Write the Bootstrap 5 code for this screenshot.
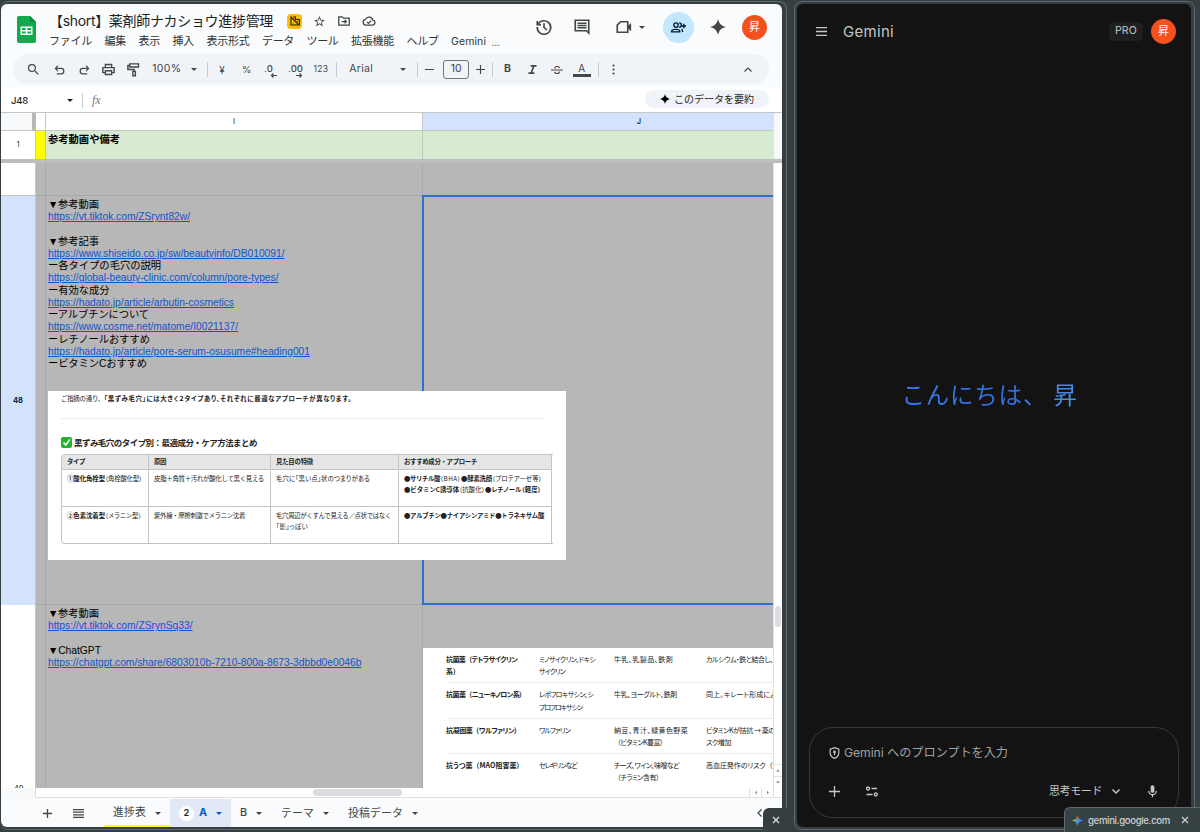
<!DOCTYPE html>
<html lang="ja">
<head>
<meta charset="utf-8">
<meta name="viewport" content="width=device-width, initial-scale=1">
<title>薬剤師ナカショウ進捗管理</title>
<link href="https://cdn.jsdelivr.net/npm/bootstrap@5.3.0/dist/css/bootstrap.min.css" rel="stylesheet">
<style>
:root{--frame:#353f42;--edge:#5f6a6c;--ink:#444746;--cell:#b7b7b7;--pick:#d3e3fd}
body{width:1200px;height:832px;overflow:hidden;background:var(--frame);font-family:Inter,"Noto Sans CJK JP",sans-serif;line-height:1;color:#1f1f1f}
svg{display:block;flex:none;overflow:visible}
[data-w]{display:inline-block;white-space:nowrap;flex:none}
.ln{fill:none;stroke:currentColor;stroke-width:2.2}
.desk{height:832px;padding:1px 4px 2px 0;gap:7px}
.pane{border:1px solid var(--edge);border-radius:8px;height:829px}
.pane-l{width:787px;padding:2px 4px 2px 1px;border-left:0}
.pane-r{width:401px;padding:2px 3px 2px 2px}
.win{border-radius:6px;overflow:hidden;height:823px}
.sheets{background:#f9fbfd}
.mid{justify-content:center;align-items:center;display:flex;flex:none}
/* header */
.top{height:50px}
.logo-box{width:48px;padding:12px 0 0 16px}
.doc-title{font-size:14px;color:#1f1f1f}
.menu{gap:12.5px;font-size:11px;color:#333}
.acts{color:var(--ink)}
.avatar{width:25px;height:25px;border-radius:50%;background:#f4511e;color:#fff;font-size:11px}
.share{width:31px;height:31px;border-radius:50%;background:#c2e7ff;color:#001d35}
/* toolbar */
.tools{height:30px;margin:0 13px 0 12px;border-radius:15px;background:#f0f4f9;color:var(--ink);font-size:10.5px;padding:1px 0 0 7px}
.t{width:24.7px}
.sep{width:1px;height:15px;background:#c7c9cc;flex:none}
.size-box{width:26px;height:19px;border:1px solid #747775;border-radius:3px;font-size:10.5px}
.caret-d{width:0;height:0;border:3.5px solid transparent;border-top-color:currentColor;border-bottom:0;flex:none}
.formula{height:28px;padding-top:4px;background:linear-gradient(#f9fbfd 2px,#fff 4px);font-size:9.5px}
.sum{width:124px;height:18px;border-radius:9px;background:#f0f3f8;font-size:10px;margin:-2px 13px 0 0;gap:4px}
/* grid */
.sheet{height:676px;display:grid;grid-template-columns:35px 10px 377px 350px 9px;grid-template-rows:18px 28px 4px 33px 409px 183px;border-top:1px solid #c4c7c5;background:#fff}
.sheet>*{min-width:0;min-height:0}
.hd{font-size:7.5px;color:#444;border-bottom:1px solid #c4c7c5;font-weight:500}
.rh{font-size:7.5px;color:#333;border-right:1px solid #c4c7c5}
.corner{background:#f8f9fa;border-right:4px solid #b7b7b7;border-bottom:1px solid #c4c7c5}
.g{background:var(--cell);border-right:1px solid #a8a8a8;border-bottom:1px solid #a8a8a8}
.green{background:#d9ead3;border-right:1px solid #bccbb7}
.freeze{grid-column:1/-1;background:#bdbfbe}
.notes{font:10.3px/12.28px "Liberation Sans","Noto Sans CJK JP",sans-serif;color:#000;padding:2.8px 0 0 3px}
.notes div{height:12.28px;white-space:nowrap}
.notes a{color:#1155cc;text-decoration:underline}
.sel{border:2px solid #2f6fd0;border-right:0;background:var(--cell);margin:-1px 0 0 -1px;z-index:1}
.rail{background:#fff;border-left:1px solid #e0e0e0}
.thumb{background:#dadce0;border-radius:4px}
/* picture laid over the cells */
.pic{position:absolute;left:47px;top:387px;width:518px;height:169px;background:#fff;z-index:3;padding:4px 0 0 13px;font-family:"Noto Sans CJK JP",sans-serif;font-size:6.4px;color:#222}
.pic hr{margin:15px 22px 17px 0;border-color:#bbb}
.grid4{display:grid;grid-template-columns:87px 122px 128px 153px;grid-template-rows:15px 37px 37px;border:1px solid #c4c4c4;border-right:0;border-radius:4px 0 0 4px;width:492px;height:90px}
.grid4>div{border-right:1px solid #c4c4c4;border-bottom:1px solid #c4c4c4;padding:3px 0 0 5px;line-height:11px;white-space:nowrap}
.grid4>div:nth-child(-n+4){background:#e5e5e5;line-height:8px}
.grid4>div:nth-last-child(-n+4){border-bottom:0}
.palt{font-feature-settings:"palt"}
.drug{background:#fff;height:140px;margin-top:43px;overflow:hidden;padding-left:23px;font-family:"Noto Sans CJK JP",sans-serif;font-size:7px;line-height:12.2px;color:#222;font-feature-settings:"palt"}
.drug i{font-style:normal;font-feature-settings:normal}
.drow{display:grid;grid-template-columns:93px 75px 92px 80px;height:35.4px;border-bottom:1px solid #eee;padding-top:5px}
.drow>div{white-space:nowrap}
.hbar{height:10px;background:#fff;border-bottom:1px solid #dfe1e3}
.tiny{width:12px;height:10px;border-left:1px solid #ead9dd}
.tabs{height:29px;font-size:10.8px;color:var(--ink);padding-top:1px}
.tb{height:29px}
/* corner chips over the frame */
.chip-l{position:absolute;left:763px;top:808px;width:24px;height:24px;background:var(--frame);border-radius:6px 0 0 0;z-index:5;color:#dfe3e4;padding-left:1px}
.chip-r{position:absolute;left:1064px;top:807px;width:136px;height:25px;background:#374245;border:1px solid var(--edge);border-width:1px 0 0 1px;border-radius:6px 0 0 0;z-index:5;color:#ccd0d1;font-size:9.6px;font-weight:500}
/* assistant */
.gem{background:#131314;color:#c4c7c5}
.pro{width:34px;height:19px;border-radius:5px;background:#1e1f20;font-size:10.5px}
.hello{font:400 23.5px/30px "Noto Sans CJK JP",sans-serif;background:linear-gradient(90deg,#3678e8,#346fdd 60%,#4c92ea);-webkit-background-clip:text;background-clip:text;color:transparent;margin:2px 9px 0 0}
.prompt{width:370px;height:91px;border:1px solid #37393b;border-radius:24px;margin:0 auto 9px 12px}
</style>
</head>
<body>
<div class="desk d-flex">
 <section class="pane pane-l">
  <div class="win sheets position-relative d-flex flex-column">
   <header class="top d-flex">
    <div class="logo-box"><svg width="19" height="27" viewBox="0 0 19 27"><path d="M2 0h11l6 6v19a2 2 0 0 1-2 2H2a2 2 0 0 1-2-2V2a2 2 0 0 1 2-2z" fill="#12a94f"/><path d="M13 0l6 6h-5a1 1 0 0 1-1-1z" fill="#0b8a3e"/><path d="M3.500 10.500h12v8.500h-12z" fill="#fff"/><path d="M5 12h3.700v2H5zM10.300 12H14v2h-3.700zM5 15.600h3.700v2H5zM10.300 15.600H14v2h-3.700z" fill="#12a94f"/></svg></div>
    <div>
     <div class="d-flex align-items-center" style="height:20px;margin-top:7px">
      <span class="doc-title" data-w="224">【short】薬剤師ナカショウ進捗管理</span>
      <span class="mid rounded-1" style="width:15px;height:15px;background:#fbbc04;margin-left:14px"><svg width="12" height="12" viewBox="0 0 24 24" class="ln"><path d="M8 4h5v5h8v10M4 6v14h14M3 3l18 18M8 12v0M8 16h1M12 16v0M16 13h2"/></svg></span>
      <svg style="margin-left:11px" width="13" height="13" viewBox="0 0 24 24" fill="#444746"><path d="M22 9.240l-7.190-.62L12 2 9.190 8.630 2 9.240l5.460 4.730L5.820 21 12 17.270 18.180 21l-1.630-7.030L22 9.240zM12 15.400l-3.760 2.270 1-4.280-3.320-2.880 4.380-.38L12 6.100l1.710 4.040 4.380.38-3.320 2.880 1 4.280L12 15.400z"/></svg>
      <svg style="margin-left:11px;color:#444746" width="14" height="14" viewBox="0 0 24 24" class="ln"><path d="M3 5h6l2 2h10v12H3zM8 13h8M13 10l3 3-3 3"/></svg>
      <svg style="margin-left:11px;color:#444746" width="14" height="14" viewBox="0 0 24 24" class="ln"><path d="M7 19a5 5 0 0 1-1-9.900 6.500 6.500 0 0 1 12.300 1.400A4.300 4.300 0 0 1 18.500 19zM8.500 13.500l2.500 2.500 4.500-4.500"/></svg>
     </div>
     <nav class="menu d-flex align-items-center" style="height:20px"><span data-w="43">ファイル</span><span data-w="21.5">編集</span><span data-w="21.5">表示</span><span data-w="21.5">挿入</span><span data-w="43">表示形式</span><span data-w="32">データ</span><span data-w="32">ツール</span><span data-w="43">拡張機能</span><span data-w="32">ヘルプ</span><span data-w="35" style="font-size:10.500px;padding-top:2px">Gemini</span><span style="margin-left:-7px;padding-top:2px;font-size:10px">…</span></nav>
    </div>
    <div class="acts d-flex align-items-center ms-auto" style="height:46px;margin-right:15px">
     <svg width="18" height="18" viewBox="0 0 24 24" class="ln"><path d="M4 8.500A9 9 0 1 1 3 12M3 4v5h5M12 7v5.500l4 3.500"/></svg>
     <svg style="margin-left:20px" width="18" height="18" viewBox="0 0 24 24"><path class="ln" d="M3 3h18v17l-3-3H3z"/><path class="ln" d="M6 7h12M6 10h12M6 13h12" style="stroke-width:1.700"/></svg>
     <svg style="margin-left:24px" width="18" height="18" viewBox="0 0 24 24"><path class="ln" d="M7.500 5H17v14H3V9.500z"/><path d="M17 10.500l4.500-4v11l-4.500-4z" fill="currentColor"/></svg>
     <span class="caret-d" style="margin-left:6px"></span>
     <span class="share mid" style="margin-left:18px"><svg width="15" height="15" viewBox="0 0 24 24" class="ln"><circle cx="8" cy="8" r="3.500"/><path d="M13 4.500a3.500 3.500 0 0 1 0 7M1 19v-1c0-4 13-4 13 0v1zM17 14.500c1.200.8 1.500 2 1.500 4.500M20.500 6v7M17 9.500h7"/></svg></span>
     <svg style="margin-left:16px" width="16" height="16" viewBox="0 0 24 24" fill="currentColor"><path d="M12 0c1.500 7 5 10.500 12 12-7 1.500-10.500 5-12 12-1.500-7-5-10.500-12-12C7 10.500 10.500 7 12 0z"/></svg>
     <span class="avatar mid" style="margin-left:16px">昇</span>
    </div>
   </header>
   <div class="tools d-flex align-items-center">
    <span class="mid" style="width:27px"><svg width="15" height="15" viewBox="0 0 24 24" fill="currentColor"><path d="M15.500 14h-.79l-.28-.27A6.470 6.470 0 0 0 16 9.500 6.500 6.500 0 1 0 9.500 16c1.610 0 3.090-.59 4.230-1.570l.27.28v.79l5 4.990L20.490 19l-4.990-5zm-6 0a4.500 4.500 0 1 1 0-9 4.500 4.500 0 0 1 0 9z"/></svg></span>
    <span class="t mid"><svg width="13" height="13" viewBox="0 0 24 24" class="ln"><path d="M7 20h8a5 5 0 0 0 0-10H5M9 5L4.500 10 9 15"/></svg></span>
    <span class="t mid"><svg width="13" height="13" viewBox="0 0 24 24" class="ln"><path d="M17 20H9a5 5 0 0 1 0-10h10M15 5l4.500 5L15 15"/></svg></span>
    <span class="t mid"><svg width="15" height="15" viewBox="0 0 24 24" class="ln"><path d="M7 9V4h10v5M7 17H3V9h18v8h-4M7 14h10v6H7z"/></svg></span>
    <span class="t mid"><svg width="15" height="15" viewBox="0 0 24 24" class="ln"><path d="M6 3h14v5H6zM6 5.500H3V12h10v3M11 15h4v7h-4z"/></svg></span>
    <span class="mid" style="width:42px"><span data-w="29">100%</span></span><span class="caret-d" style="margin:0 10px 0 3px"></span>
    <span class="sep" style="margin-right:2px"></span>
    <span class="t mid" style="font-size:10px">¥</span><span class="t mid" style="font-size:9.500px">%</span>
    <span class="t mid"><svg width="16" height="16" viewBox="0 0 16 16"><text x="1" y="10" font-size="9.500" font-weight="500" fill="currentColor">.0</text><path d="M14 13.500H8.500M10.500 11.500l-2 2 2 2" class="ln" style="stroke-width:1.200"/></svg></span>
    <span class="t mid"><svg width="16" height="16" viewBox="0 0 16 16"><text x="0" y="10" font-size="9.500" font-weight="500" fill="currentColor">.00</text><path d="M8 13.500h5.500M11.500 11.500l2 2-2 2" class="ln" style="stroke-width:1.200"/></svg></span>
    <span class="t mid" style="font-size:8.500px"><span data-w="14.500">123</span></span>
    <span class="sep" style="margin:0 12px 0 3px"></span>
    <span data-w="24">Arial</span><span class="caret-d" style="margin:0 11px 0 27px"></span>
    <span class="sep" style="margin-right:4px"></span>
    <span class="mid" style="width:15px"><svg width="9" height="9" viewBox="0 0 9 9" class="ln" style="stroke-width:1.200"><path d="M0 4.500h9"/></svg></span>
    <span class="size-box mid" style="margin:0 4px 0 6px">10</span>
    <span class="mid" style="width:14px"><svg width="9" height="9" viewBox="0 0 9 9" class="ln" style="stroke-width:1.200"><path d="M0 4.500h9M4.500 0v9"/></svg></span>
    <span class="sep" style="margin:0 2px 0 5px"></span>
    <b class="t mid">B</b>
    <span class="t mid"><svg width="9" height="9" viewBox="0 0 10 10" class="ln" style="stroke-width:1.800"><path d="M3 1h6.500M.5 9H7M6.300 1L3.700 9"/></svg></span>
    <span class="t mid"><svg width="12" height="12" viewBox="0 0 12 12"><text x="6" y="10" text-anchor="middle" font-size="11" font-weight="500" fill="currentColor">S</text><path d="M0 6h12" stroke="#f0f4f9" stroke-width="3"/><path d="M0 6h12" stroke="currentColor" stroke-width="1.200"/></svg></span>
    <span class="t mid flex-column"><span style="font-size:10px;line-height:10px;margin-top:1px">A</span><span style="width:18px;height:3px;background:#444746;margin-top:1px"></span></span>
    <span class="sep" style="margin:0 3px 0 4px"></span>
    <span class="mid" style="width:24px"><svg width="3" height="11" viewBox="0 0 3 11" fill="currentColor"><circle cx="1.500" cy="1.500" r="1.100"/><circle cx="1.500" cy="5.500" r="1.100"/><circle cx="1.500" cy="9.500" r="1.100"/></svg></span>
    <svg class="ms-auto ln" style="margin-right:17px;stroke-width:1.200" width="8" height="5" viewBox="0 0 8 5"><path d="M.5 4.500L4 1l3.500 3.500"/></svg>
   </div>
   <div class="formula d-flex align-items-center">
    <span data-w="17" style="margin-left:10px;font-weight:500;padding-top:2px">J48</span><span class="caret-d" style="margin-left:39px"></span><span class="sep" style="margin:0 9px"></span>
    <span style="font:italic 12px 'Liberation Serif',serif;color:#777">fx</span>
    <span class="sum mid ms-auto"><svg width="10" height="10" viewBox="0 0 24 24"><path d="M12 0c1.500 7 5 10.500 12 12-7 1.500-10.500 5-12 12-1.500-7-5-10.500-12-12C7 10.500 10.500 7 12 0z"/></svg><span data-w="80">このデータを要約</span></span>
   </div>
   <main class="sheet">
    <div class="corner"></div><div class="hd" style="border-right:1px solid #c4c7c5"></div>
    <div class="hd mid" style="border-right:1px solid #c4c7c5">I</div><div class="hd mid" style="background:var(--pick);padding-left:82px;color:#111">J</div><div class="rail" style="background:#f8f9fa"></div>
    <div class="rh mid">1</div><div style="background:#ff0;border-right:1px solid #bccbb7"></div>
    <div class="green" style="padding:3px 2px;font:bold 10.300px 'Noto Sans CJK JP',sans-serif;line-height:10px;color:#000"><span data-w="72">参考動画や備考</span></div><div class="green border-0"></div><div class="rail" style="background:#f8f9fa"></div>
    <div class="freeze"></div>
    <div class="rh" style="border-bottom:1px solid #c4c7c5"></div><div class="g"></div><div class="g"></div><div class="g border-end-0"></div><div class="rail"></div>
    <div class="rh mid fw-bold" style="background:var(--pick);color:#041e49">48</div><div class="g"></div>
    <div class="g notes" style="padding-left:2px">
     <div><span data-w="51">▼参考動画</span></div><div><a href="#" data-w="142">https://vt.tiktok.com/ZSrynt82w/</a></div><div></div>
     <div><span data-w="51">▼参考記事</span></div><div><a href="#" data-w="236.500">https://www.shiseido.co.jp/sw/beautyinfo/DB010091/</a></div>
     <div><span data-w="113">ー各タイプの毛穴の説明</span></div><div><a href="#" data-w="230.500">https://global-beauty-clinic.com/column/pore-types/</a></div>
     <div><span data-w="61.500">ー有効な成分</span></div><div><a href="#" data-w="186">https://hadato.jp/article/arbutin-cosmetics</a></div>
     <div><span data-w="101">ーアルブチンについて</span></div><div><a href="#" data-w="190">https://www.cosme.net/matome/I0021137/</a></div>
     <div><span data-w="102">ーレチノールおすすめ</span></div><div><a href="#" data-w="262">https://hadato.jp/article/pore-serum-osusume#heading001</a></div>
     <div><span data-w="99">ービタミンCおすすめ</span></div>
    </div>
    <div class="sel"></div><div class="rail"></div>
    <div class="rh overflow-hidden" style="padding:180px 0 0 13px">49</div><div class="g border-bottom-0"></div>
    <div class="g notes border-bottom-0" style="padding-left:2px">
     <div><span data-w="51">▼参考動画</span></div><div><a href="#" data-w="144.500">https://vt.tiktok.com/ZSrynSq33/</a></div><div></div>
     <div><span data-w="53">▼ChatGPT</span></div><div><a href="#" data-w="313.500">https://chatgpt.com/share/6803010b-7210-800a-8673-3dbbd0e0046b</a></div>
    </div>
    <div style="background:var(--cell)"><div class="drug">
     <div class="drow"><div><b data-w="71">抗菌薬<i>（</i>テトラサイクリン</b><br><b>系）</b></div><div><span data-w="56">ミノサイクリン、ドキシ</span><br><span data-w="26">サイクリン</span></div><div><span data-w="59">牛乳、乳製品、鉄剤</span></div><div><span data-w="67">カルシウム・鉄と結合し、</span></div></div>
     <div class="drow"><div><b data-w="76">抗菌薬<i>（</i>ニューキノロン系）</b></div><div><span data-w="54">レボフロキサシン、シ</span><br><span data-w="43">プロフロキサシン</span></div><div><span data-w="63">牛乳、ヨーグルト、鉄剤</span></div><div><span data-w="76">同上。キレート形成により</span></div></div>
     <div class="drow"><div><b data-w="71">抗凝固薬<i>（</i>ワルファリン）</b></div><div><span data-w="31">ワルファリン</span></div><div><span data-w="74">納豆、青汁、緑黄色野菜</span><br><span data-w="49"><i>（</i>ビタミンK豊富）</span></div><div><span data-w="74">ビタミンKが拮抗 → 薬のリ</span><br><span data-w="25">スク増加</span></div></div>
     <div class="drow border-0"><div><b data-w="74">抗うつ薬<i>（</i>MAO阻害薬）</b></div><div><span data-w="38">セレギリンなど</span></div><div><span data-w="65">チーズ、ワイン、味噌など</span><br><span data-w="45"><i>（</i>チラミン含有）</span></div><div><span data-w="73">高血圧発作のリスク<i>（</i>チ</span></div></div>
    </div></div>
    <div class="rail d-flex flex-column align-items-center"><span class="thumb" style="width:6px;height:21px;margin-top:1px"></span>
     <span class="mid w-100 mt-auto border-top" style="height:12px;color:#777"><span class="caret-d" style="transform:scale(.6) rotate(180deg)"></span></span><span class="mid w-100 border-top" style="height:12px;color:#777"><span class="caret-d" style="transform:scale(.6)"></span></span></div>
   </main>
   <div class="hbar d-flex align-items-center">
    <span style="width:35px;height:10px;background:#f8f9fa;border-right:1px solid #ddd"></span><span class="thumb" style="width:89px;height:7px;margin-left:277px"></span>
    <span class="tiny mid ms-auto" style="color:#777"><span class="caret-d" style="transform:scale(.6) rotate(90deg)"></span></span><span class="tiny mid" style="margin-right:8px;border-right:1px solid #ead9dd;width:13px;color:#777"><span class="caret-d" style="transform:scale(.6) rotate(-90deg)"></span></span>
   </div>
   <footer class="tabs d-flex align-items-center">
    <svg style="margin-left:42px;stroke-width:1.300" class="ln" width="9" height="9" viewBox="0 0 9 9"><path d="M0 4.500h9M4.500 0v9"/></svg>
    <svg style="margin:0 20px 0 21px;stroke-width:1.200" class="ln" width="11" height="9" viewBox="0 0 11 9"><path d="M0 .6h11M0 3.200h11M0 5.800h11M0 8.400h11"/></svg>
    <span class="tb d-flex align-items-center" style="width:66px;padding:3px 0 0 9px;border-bottom:3px solid #ff0"><span data-w="33">進捗表</span><span class="caret-d" style="margin-left:9px"></span></span>
    <span class="tb d-flex align-items-center" style="width:61px;background:#e1e9f7;padding-left:9px;color:#0b57d0"><span class="mid bg-white rounded-circle text-dark fw-bold" style="width:15px;height:15px;font-size:8.500px">2</span><b style="margin-left:5px;padding-top:1px">A</b><span class="caret-d" style="margin-left:9px"></span></span>
    <span style="margin-left:9px;font-weight:500;padding-top:1px">B</span><span class="caret-d" style="margin-left:9px"></span>
    <span data-w="33" style="margin-left:19px;padding-top:2px">テーマ</span><span class="caret-d" style="margin-left:9px"></span>
    <span data-w="55" style="margin-left:19px;padding-top:2px">投稿データ</span><span class="caret-d" style="margin-left:9px"></span>
    <svg class="ln ms-auto" style="margin-right:20px;stroke-width:1.300" width="5" height="8" viewBox="0 0 5 8"><path d="M4.500.5L1 4l3.500 3.500"/></svg>
   </footer>
   <figure class="pic m-0">
    <div style="line-height:8px"><span data-w="43">ご指摘の通り、</span><b class="palt" data-w="248">「黒ずみ毛穴」には大きく２タイプあり、それぞれに最適なアプローチが異なります。</b></div>
    <hr>
    <div class="d-flex align-items-center" style="height:12px;margin-bottom:6px;font-size:8.500px;gap:2px"><svg width="11" height="11" viewBox="0 0 11 11"><rect width="11" height="11" rx="2" fill="#1fb42c"/><path d="M2.500 5.500l2.300 2.500 4-5.500" fill="none" stroke="#fff" stroke-width="1.600"/></svg><b data-w="183">黒ずみ毛穴のタイプ別：最適成分・ケア方法まとめ</b></div>
    <div class="grid4">
     <div><b data-w="18">タイプ</b></div><div><b data-w="12">原因</b></div><div><b data-w="37">見た目の特徴</b></div><div><b data-w="73">おすすめ成分・アプローチ</b></div>
     <div><b data-w="38">①酸化角栓型</b><span class="palt" data-w="37">（角栓酸化型）</span></div><div><span data-w="110">皮脂＋角質＋汚れが酸化して黒く見える</span></div><div><span class="palt" data-w="94">毛穴に「黒い点」状のつまりがある</span></div><div><b data-w="36">●サリチル酸</b><span class="palt" data-w="21">（BHA）</span><b data-w="31">●酵素洗顔</b><span class="palt" data-w="50">（プロテアーゼ等）</span><br><b data-w="55">●ビタミンC誘導体</b><span class="palt" data-w="26">（抗酸化）</span><b class="palt" data-w="56">●レチノール（軽度）</b></div>
     <div><b data-w="38">②色素沈着型</b><span class="palt" data-w="37">（メラニン型）</span></div><div><span data-w="91">紫外線・摩擦刺激でメラニン沈着</span></div><div><span data-w="115">毛穴周辺がくすんで見える／点状ではなく</span><br><span class="palt" data-w="32">「影」っぽい</span></div><div><b data-w="140">●アルブチン●ナイアシンアミド●トラネキサム酸</b></div>
    </div>
   </figure>
  </div>
 </section>
 <section class="pane pane-r">
  <div class="win gem d-flex flex-column">
   <header class="d-flex align-items-center" style="height:55px;padding:0 15px 0 19px">
    <svg class="ln" style="stroke-width:1.300" width="11" height="9" viewBox="0 0 11 9"><path d="M0 .7h11M0 4.500h11M0 8.300h11"/></svg>
    <span data-w="51" style="margin-left:16px;font-size:15px">Gemini</span>
    <span class="pro mid ms-auto"><span data-w="22">PRO</span></span><span class="avatar mid" style="margin-left:8px">昇</span>
   </header>
   <div class="flex-grow-1 mid"><span class="hello" data-w="176">こんにちは、 昇</span></div>
   <div class="prompt d-flex flex-column">
    <div class="d-flex align-items-center" style="padding:18px 0 0 18px;font-size:12.200px;color:#a0a2a1"><svg class="ln" style="color:#c4c7c5" width="13" height="14" viewBox="0 0 24 24"><path d="M12 2l8 3v6c0 5-3 9-8 11-5-2-8-6-8-11V5z"/><circle cx="12" cy="10" r="1.500"/><path d="M12 11v5"/></svg><span data-w="164" style="margin-left:3px">Gemini へのプロンプトを入力</span></div>
    <div class="d-flex align-items-center mt-auto" style="padding:0 18px 18px 19px;font-size:11px">
     <svg class="ln" style="stroke-width:1.300" width="11" height="11" viewBox="0 0 11 11"><path d="M0 5.500h11M5.500 0v11"/></svg>
     <svg class="ln" style="margin-left:26px;stroke-width:1.300" width="12" height="11" viewBox="0 0 12 11"><circle cx="2" cy="2.500" r="1.500"/><path d="M5.500 2.500H11M.5 8.500h6"/><circle cx="9.800" cy="8.500" r="1.500"/></svg>
     <span class="ms-auto" data-w="53">思考モード</span>
     <svg class="ln" style="margin-left:10px;stroke-width:1.500" width="8" height="5" viewBox="0 0 8 5"><path d="M.5.5L4 4 7.500.5"/></svg>
     <svg style="margin-left:25px" width="15" height="15" viewBox="0 0 24 24" fill="currentColor"><path d="M12 14c1.660 0 3-1.340 3-3V5c0-1.660-1.340-3-3-3S9 3.340 9 5v6c0 1.660 1.340 3 3 3zm5-3c0 2.760-2.240 5-5 5s-5-2.240-5-5H5c0 3.530 2.610 6.430 6 6.920V21h2v-3.080c3.390-.49 6-3.390 6-6.920h-2z"/></svg>
    </div>
   </div>
  </div>
 </section>
</div>
<div class="chip-l mid"><svg class="ln" style="stroke-width:1.200" width="6" height="6" viewBox="0 0 6 6"><path d="M0 0l6 6M6 0L0 6"/></svg></div>
<div class="chip-r d-flex align-items-center">
 <svg style="margin-left:7px" width="11" height="11" viewBox="0 0 24 24"><defs><linearGradient id="sp" x1="0" y1=".3" x2="1" y2=".7"><stop offset=".1" stop-color="#f5c023"/><stop offset=".35" stop-color="#58b368"/><stop offset=".55" stop-color="#4285f4"/><stop offset="1" stop-color="#4a8cf7"/></linearGradient></defs><path d="M12 0c1.500 7 5 10.500 12 12-7 1.500-10.500 5-12 12-1.500-7-5-10.500-12-12C7 10.500 10.500 7 12 0z" fill="url(#sp)"/><path d="M12 0c1 4 2 6 4 8l-7-1c1.500-2 2.300-4 3-7z" fill="#ea4335"/></svg>
 <span data-w="82" style="margin-left:5px;padding-top:1px">gemini.google.com</span>
 <svg class="ln" style="margin-left:12px;stroke-width:1.300" width="6" height="6" viewBox="0 0 6 6"><path d="M0 0l6 6M6 0L0 6"/></svg>
</div>
<script src="https://cdn.jsdelivr.net/npm/bootstrap@5.3.0/dist/js/bootstrap.bundle.min.js"></script>
<script>
document.querySelectorAll('[data-w]').forEach(function (el) {
  var gap = (parseFloat(el.dataset.w) - el.getBoundingClientRect().width) / el.textContent.length;
  el.style.letterSpacing = gap.toFixed(3) + 'px';
});
</script>
</body>
</html>
